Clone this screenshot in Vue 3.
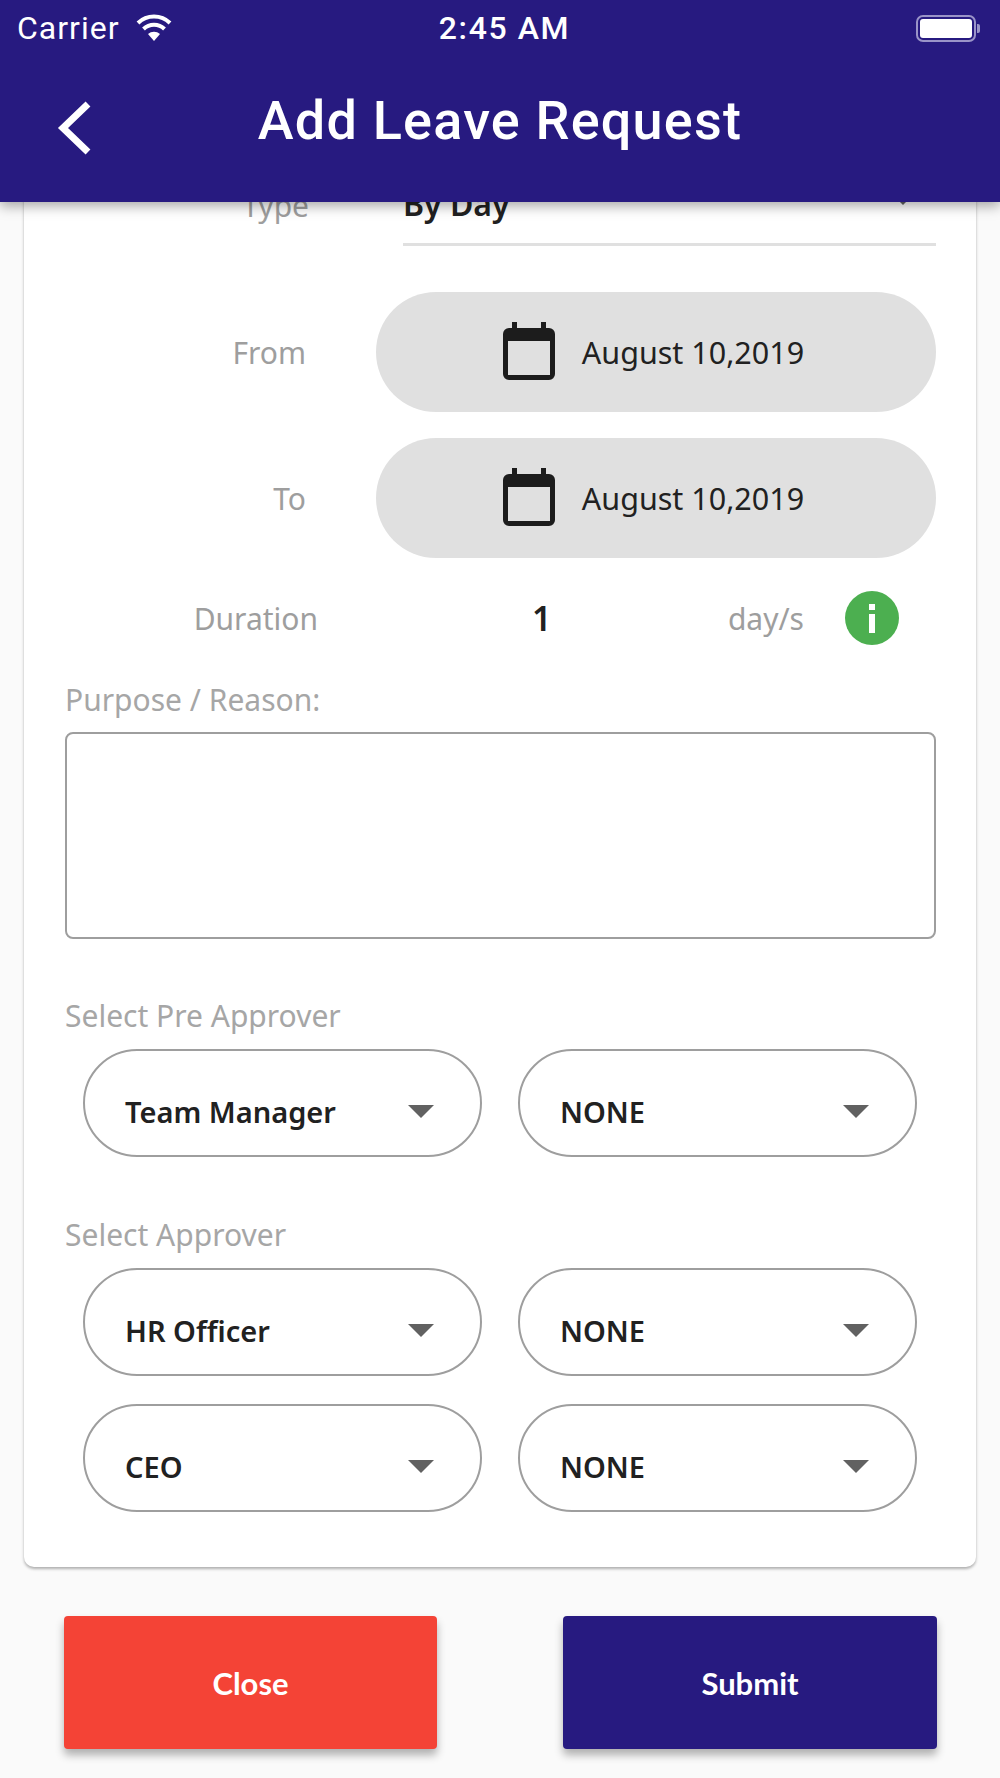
<template>
  <div class="screen">
    <!-- Header -->
    <header class="app-header">
      <div class="status-bar">
        <div class="status-left">
          <span>Carrier</span>
          <svg class="wifi" viewBox="0 0 38 28">
            <path d="M19 27 L13 20 A9 9 0 0 1 25 20 Z" fill="#fff" />
            <path d="M8.5 15 A15 15 0 0 1 29.5 15" fill="none" stroke="#fff" stroke-width="4" />
            <path d="M3 9 A23 23 0 0 1 35 9" fill="none" stroke="#fff" stroke-width="4" />
          </svg>
        </div>
        <div class="status-time">2:45 AM</div>
        <div class="status-right">
          <div class="battery"><span class="battery-fill"></span></div>
        </div>
      </div>
      <div class="title-bar">
        <svg class="back" viewBox="0 0 36 54">
          <path d="M32 3 L7 27 L32 51" fill="none" stroke="#fff" stroke-width="7" />
        </svg>
        <h1>Add Leave Request</h1>
      </div>
    </header>

    <main class="content">
      <section class="card">
        <div class="row type-row">
          <span class="row-label">Type</span>
          <div class="type-select">
            <span>By Day</span>
            <span class="caret small"></span>
          </div>
        </div>

        <div v-for="d in dates" :key="d" class="row date-row">
          <span class="row-label">{{ d }}</span>
          <div class="date-pill">
            <svg class="calendar" viewBox="0 0 52 58">
              <path d="M9 0h5v6h24V0h5v6h3a6 6 0 0 1 6 6v40a6 6 0 0 1-6 6H6a6 6 0 0 1-6-6V12a6 6 0 0 1 6-6h3z M5 19v34h42V19z" fill="#1c1c1c" fill-rule="evenodd" />
            </svg>
            <span>August 10,2019</span>
          </div>
        </div>

        <div class="duration-row">
          <span class="duration-label">Duration</span>
          <span class="duration-value">1</span>
          <span class="duration-unit">day/s</span>
          <span class="info-badge">
            <span class="info-dot"></span>
            <span class="info-stem"></span>
          </span>
        </div>

        <div class="field-label reason-label">Purpose / Reason:</div>
        <div class="reason-box"></div>

        <div class="field-label pre-label">Select Pre Approver</div>
        <div class="select-grid">
          <div v-for="s in preApprovers" :key="s.id" class="select-pill">
            <span>{{ s.name }}</span>
            <span class="caret"></span>
          </div>
        </div>

        <div class="field-label approver-label">Select Approver</div>
        <div class="select-grid">
          <div v-for="s in approvers" :key="s.id" class="select-pill">
            <span>{{ s.name }}</span>
            <span class="caret"></span>
          </div>
        </div>
      </section>

      <div class="actions">
        <button type="button" class="btn btn-close">Close</button>
        <button type="button" class="btn btn-submit">Submit</button>
      </div>
    </main>
  </div>
</template>

<script setup>
const dates = ['From', 'To']

const preApprovers = [
  { id: 1, name: 'Team Manager' },
  { id: 2, name: 'NONE' },
]

const approvers = [
  { id: 1, name: 'HR Officer' },
  { id: 2, name: 'NONE' },
  { id: 3, name: 'CEO' },
  { id: 4, name: 'NONE' },
]
</script>

<style>
html, body { margin: 0; background: #fafafa; }
</style>

<style scoped>
.screen {
  width: 1000px;
  height: 1778px;
  overflow: hidden;
  background: #fafafa;
  font-family: "Noto Sans", sans-serif;
  display: flex;
  flex-direction: column;
}

.app-header {
  position: relative;
  z-index: 2;
  height: 202px;
  flex-shrink: 0;
  box-sizing: border-box;
  background: #271a80;
  color: #fff;
  box-shadow: 0 4px 12px rgba(0, 0, 0, 0.35);
  font-family: "Roboto", sans-serif;
}

.status-bar {
  height: 56px;
  display: flex;
  align-items: center;
  padding: 0 24px 0 17px;
  font-size: 32px;
}

.status-left {
  flex: 1;
  display: flex;
  align-items: center;
  gap: 15px;
  letter-spacing: 1px;
}

.wifi { width: 38px; height: 28px; }

.status-time {
  font-weight: 500;
  letter-spacing: 1.6px;
  margin-left: 16px;
}

.status-right {
  flex: 1;
  display: flex;
  justify-content: flex-end;
}

.battery {
  position: relative;
  width: 60px;
  height: 27px;
  box-sizing: border-box;
  border: 2px solid #9a94c8;
  border-radius: 7px;
  padding: 2px;
  display: flex;
}

.battery::after {
  content: "";
  position: absolute;
  right: -6px;
  top: 7px;
  width: 3px;
  height: 9px;
  background: #9a94c8;
  border-radius: 0 2px 2px 0;
}

.battery-fill {
  flex: 1;
  background: #fff;
  border-radius: 3px;
}

.title-bar {
  height: 126px;
  display: flex;
  align-items: center;
  justify-content: center;
  position: relative;
}

.back {
  position: absolute;
  left: 56px;
  top: 45px;
  width: 36px;
  height: 54px;
}

.title-bar h1 {
  margin: 4px 0 0;
  font-size: 54px;
  font-weight: 500;
  letter-spacing: 1.2px;
  line-height: 1;
}

.content {
  flex: 1;
  min-height: 0;
  padding: 0 24px;
}

.card {
  box-sizing: border-box;
  height: 1400px;
  margin-top: -35px;
  padding: 0 40px 0 41px;
  background: #fff;
  border-radius: 10px;
  box-shadow: 0 2px 3px rgba(0, 0, 0, 0.3);
}

.row {
  display: flex;
  align-items: center;
  color: #9e9e9e;
  font-size: 30px;
}

.row-label {
  width: 241px;
  text-align: right;
  flex-shrink: 0;
}

.type-row { height: 79px; }
.type-row .row-label { width: 244px; margin-top: -3px; }

.type-select {
  margin-left: 94px;
  flex: 1;
  align-self: stretch;
  display: flex;
  align-items: center;
  justify-content: space-between;
  padding: 0 24px 4px 0;
  box-sizing: border-box;
  border-bottom: 3px solid #e0e0e0;
  color: #212121;
  font-size: 32px;
  font-weight: 600;
}

.date-row { margin-top: 26px; height: 120px; }
.type-row + .date-row { margin-top: 46px; }

.date-pill {
  margin-left: 70px;
  flex: 1;
  height: 120px;
  box-sizing: border-box;
  padding-right: 5px;
  border-radius: 60px;
  background: #e0e0e0;
  color: #212121;
  display: flex;
  align-items: center;
  justify-content: center;
  gap: 27px;
  font-size: 30.5px;
}

.calendar { width: 52px; height: 58px; margin-top: -3px; }

.duration-row {
  height: 54px;
  margin-top: 33px;
  display: grid;
  grid-template-columns: 330px 1fr auto 132px;
  align-items: center;
  font-size: 30px;
  color: #9e9e9e;
}

.duration-label { text-align: right; padding-right: 77px; box-sizing: border-box; }
.duration-value {
  padding-left: 137px;
  color: #212121;
  font-size: 34px;
  font-weight: 600;
}

.info-badge {
  justify-self: end;
  margin-right: 37px;
  width: 54px;
  height: 54px;
  border-radius: 50%;
  background: #4caf50;
  display: flex;
  flex-direction: column;
  align-items: center;
  justify-content: center;
  gap: 4px;
}

.info-dot { width: 6px; height: 6px; background: #fff; }
.info-stem { width: 6px; height: 19px; background: #fff; }

.field-label {
  color: #a6a6a6;
  font-size: 30px;
  line-height: 40px;
}

.reason-label { margin-top: 35px; }

.reason-box {
  height: 207px;
  box-sizing: border-box;
  margin-top: 12px;
  border: 2px solid #9e9e9e;
  border-radius: 8px;
}

.pre-label { margin-top: 57px; }
.approver-label { margin-top: 58px; }

.select-grid {
  margin: 13px 19px 0 18px;
  display: grid;
  grid-template-columns: 399px 399px;
  justify-content: space-between;
  row-gap: 28px;
}

.select-pill {
  height: 108px;
  box-sizing: border-box;
  border: 2px solid #9e9e9e;
  border-radius: 54px;
  padding: 16px 46px 0 40px;
  display: flex;
  align-items: center;
  justify-content: space-between;
  color: #212121;
  font-size: 29px;
  font-weight: 600;
}

.caret {
  width: 0;
  height: 0;
  border-left: 13px solid transparent;
  border-right: 13px solid transparent;
  border-top: 13px solid #616161;
}

.caret.small {
  border-left-width: 9px;
  border-right-width: 9px;
  border-top-width: 9px;
  margin-top: -6px;
}

.actions {
  margin-top: 49px;
  padding: 0 39px 0 40px;
  display: flex;
  justify-content: space-between;
}

.btn {
  width: 373px;
  height: 133px;
  border: none;
  border-radius: 4px;
  color: #fff;
  font-family: "Lato", sans-serif;
  font-size: 31px;
  font-weight: 700;
  box-shadow: 0 6px 8px rgba(0, 0, 0, 0.3);
}

.btn-close { background: #f44336; }
.btn-submit { width: 374px; background: #271a80; }
</style>
